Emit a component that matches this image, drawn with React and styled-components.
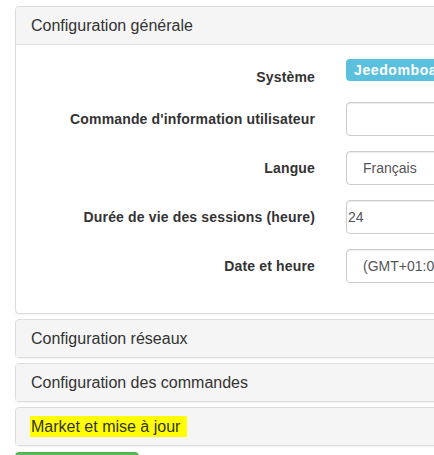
import React from "react";
import styled, { createGlobalStyle } from "styled-components";

const GlobalStyle = createGlobalStyle`
  html, body {
    margin: 0;
    padding: 0;
    background: #fff;
    overflow: hidden;
  }
  body {
    font-family: "Liberation Sans", Arial, sans-serif;
    font-size: 14px;
    line-height: 1.42857;
    color: #333;
  }
`;

const Page = styled.div`
  padding: 6px 0 0 15px;
  width: 760px;
`;

const Panel = styled.div`
  background: #fff;
  border: 1px solid #ddd;
  border-radius: 4px;
  box-shadow: 0 1px 1px rgba(0, 0, 0, 0.05);
  & + & {
    margin-top: 5px;
  }
`;

const PanelHeading = styled.div`
  background: #f5f5f5;
  padding: 10px 15px;
  border-top-left-radius: 3px;
  border-top-right-radius: 3px;
  border-bottom: ${(p) => (p.$open ? "1px solid #ddd" : "0")};
`;

const PanelTitle = styled.h4`
  margin: 0;
  font-size: 16px;
  font-weight: 400;
  line-height: 17px;
  color: #333;
`;

const Highlight = styled.span`
  background: #ffff00;
  padding: 2px 7px 2px 1px;
  margin-left: -1px;
`;

const PanelBody = styled.div`
  padding: 15px 15px 30px;
`;

const FormRow = styled.div`
  display: grid;
  grid-template-columns: 284px 1fr;
  column-gap: 31px;
  align-items: start;
  & + & {
    margin-top: 15px;
  }
`;

const Label = styled.label`
  text-align: right;
  font-weight: 700;
  padding-top: 7px;
  line-height: 20px;
  letter-spacing: 0.15px;
`;

const Badge = styled.span`
  display: inline-block;
  justify-self: start;
  margin-top: -1px;
  height: 22px;
  line-height: 22px;
  padding: 0 8px;
  background: #5bc0de;
  color: #fff;
  font-weight: 700;
  font-size: 14px;
  letter-spacing: 0.6px;
  border-radius: 4px;
  white-space: nowrap;
`;

const Field = styled.div`
  box-sizing: border-box;
  width: 320px;
  height: 34px;
  padding: 6px ${(p) => p.$pad || 12}px;
  border: 1px solid #ccc;
  border-radius: 4px;
  box-shadow: inset 0 1px 1px rgba(0, 0, 0, 0.075);
  color: #555;
  font-size: 14px;
  line-height: 20px;
  white-space: nowrap;
  overflow: hidden;
`;

const SaveButton = styled.button`
  display: block;
  margin-top: 6px;
  width: 124px;
  height: 34px;
  border: 1px solid #4cae4c;
  border-radius: 4px;
  background: #5cb85c;
  color: #fff;
  font-family: inherit;
  font-size: 14px;
`;

const rows = [
  { label: "Commande d'information utilisateur", value: "" },
  { label: "Langue", value: "Français", pad: 16 },
  { label: "Durée de vie des sessions (heure)", value: "24", pad: 1 },
  { label: "Date et heure", value: "(GMT+01:00) Brussels, Copenhagen, Madrid, Paris", pad: 16 },
];

export default function App() {
  return (
    <>
      <GlobalStyle />
      <Page>
        <Panel>
          <PanelHeading $open>
            <PanelTitle>Configuration générale</PanelTitle>
          </PanelHeading>
          <PanelBody>
            <FormRow>
              <Label>Système</Label>
              <Badge>Jeedomboard</Badge>
            </FormRow>
            {rows.map((r) => (
              <FormRow key={r.label}>
                <Label>{r.label}</Label>
                <Field $pad={r.pad}>{r.value}</Field>
              </FormRow>
            ))}
          </PanelBody>
        </Panel>
        <Panel>
          <PanelHeading>
            <PanelTitle>Configuration réseaux</PanelTitle>
          </PanelHeading>
        </Panel>
        <Panel>
          <PanelHeading>
            <PanelTitle>Configuration des commandes</PanelTitle>
          </PanelHeading>
        </Panel>
        <Panel>
          <PanelHeading>
            <PanelTitle>
              <Highlight>Market et mise à jour</Highlight>
            </PanelTitle>
          </PanelHeading>
        </Panel>
        <SaveButton>Sauvegarder</SaveButton>
      </Page>
    </>
  );
}
